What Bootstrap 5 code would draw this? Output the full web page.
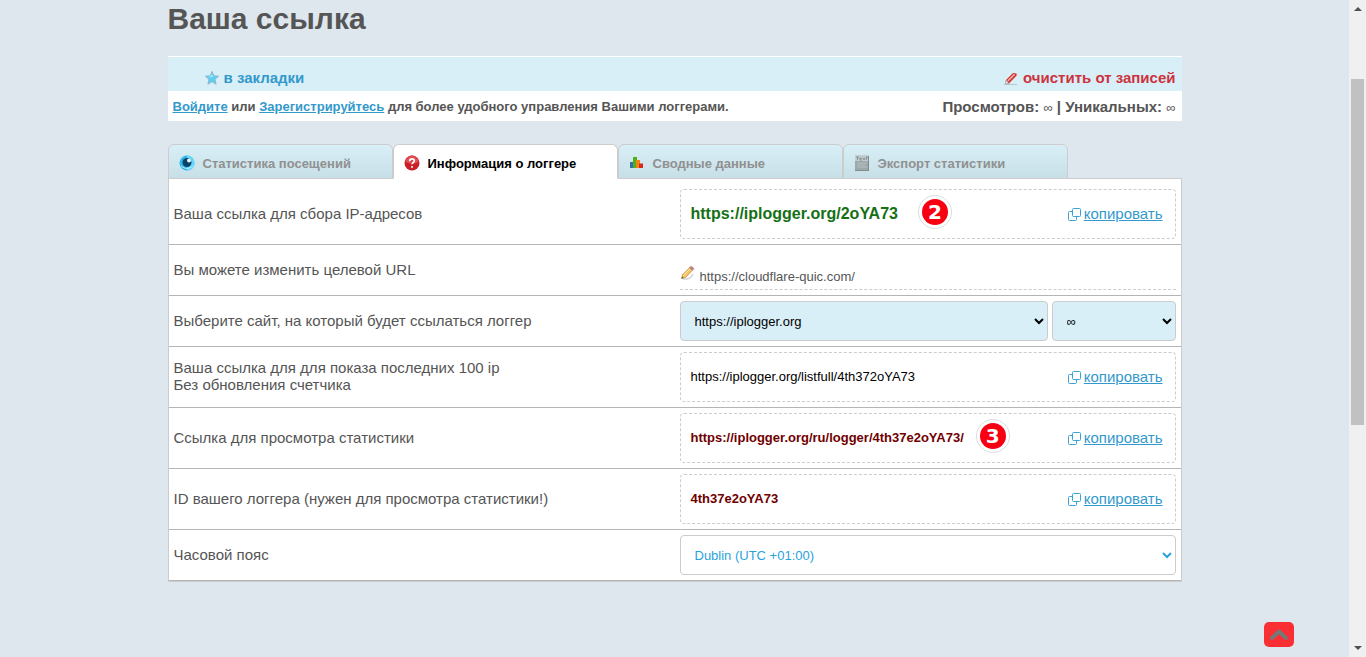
<!DOCTYPE html>
<html lang="ru">
<head>
<meta charset="utf-8">
<meta name="viewport" content="width=device-width, initial-scale=1">
<title>Ваша ссылка</title>
<link href="https://cdn.jsdelivr.net/npm/bootstrap@5.3.0/dist/css/bootstrap.min.css" rel="stylesheet">
<style>
  body { background: #dde7ed; color: #555; font-family: "Liberation Sans", Arial, sans-serif; font-size: 15px; line-height: 17px; }
  a { color: #3399cc; }
  .page-wrap { max-width: 1014px; }
  .page-title { font-size: 30px; line-height: 38px; font-weight: 700; margin-bottom: 18px; }
  .toolbar { background: #d9eff7; border-top: 1px solid #fff; padding: 12px 6px 4px 36px; min-height: 35px; }
  .toolbar a, .toolbar button { font-size: 15px; font-weight: 700; line-height: 18px; }
  .btn-clear { color: #cc3340; }
  .infobar { padding: 7px 6px 5px 5px; height: 30px; margin-bottom: 23px; }
  .infobar .hint { font-size: 13px; }
  .infinity { font-size: 13px; font-weight: 400; }
  .log-tabs { margin-bottom: -1px; border: 0; }
  .log-tabs .nav-item { flex: 0 1 225px; }
  .log-tabs .nav-link { display: flex; align-items: center; gap: 8px; width: 100%; height: 35px; margin: 0; padding: 3px 10px 0; border: 1px solid #ccc; border-radius: 6px 6px 0 0; background: linear-gradient(#d9eff7, #c7dfe7); color: #909090; font-size: 13px; font-weight: 700; text-align: left; }
  .log-tabs .nav-link.active { background: #fff; color: #000; border-color: #ccc #ccc #fff; }
  .log-panel { border: 1px solid #ccc; }
  .log-panel .entry { border-bottom: 1px solid #b5b5b5; }
  .entry > div { padding: 5px; }
  .entry > div:first-child { padding-bottom: 7px; }
  .entry:first-child > div { padding-top: 10px; }
  .link-box { height: 50px; border: 1px dashed #ccc; border-radius: 4px; padding: 0 12px 2px 10px; color: #000; font-size: 13px; }
  .link-main { color: #157015; font-size: 16px; font-weight: 700; }
  .link-secret { color: #700000; font-weight: 700; }
  .btn-copy { color: #3399cc; font-size: 15px; line-height: 17px; }
  .btn-copy svg { margin-right: 3px; }
  .step { width: 34px; height: 34px; border-radius: 50%; border: 1px solid #ddd; padding: 3px; background: #fff; margin: 0 auto 2px 12px; }
  .link-main + .step { margin-left: 20px; }
  .step span { display: block; width: 26px; height: 26px; border-radius: 50%; background: #f80012; color: #fff; text-align: center; font: 700 20px/26px "DejaVu Sans", sans-serif; }
  .target { border-bottom: 1px dashed #ccc; height: 40px; padding-top: 13px; }
  .target svg { margin-bottom: 6px; }
  .target input { border: 0; outline: 0; background: none; color: #555; font-size: 13px; padding: 0; }
  .pick { height: 40px; border: 1px solid #ccc; border-radius: 4px; background: #d9eff7; color: #000; font-size: 13px; padding: 10px; }
  .pick-zone { background: #fff; color: #29a3dd; }
  .btn-top { right: 72px; bottom: 10px; width: 30px; height: 25px; border-radius: 5px; background: #fa2f33; }
  .scroll-rail { flex: 0 0 17px; background: #f0f0f0; padding: 0 2px; }
  .rail-thumb { position: absolute; top: 79px; left: 2px; right: 2px; height: 346px; background: #c1c1c1; }
</style>
</head>
<body>
<svg class="d-none" aria-hidden="true">
  <symbol id="copy" viewBox="0 0 13 13"><path d="M4.500 1.500a1 1 0 0 1 1-1h6a1 1 0 0 1 1 1v6a1 1 0 0 1-1 1h-6a1 1 0 0 1-1-1zM4.500 3.500h-3a1 1 0 0 0-1 1v7a1 1 0 0 0 1 1h6a1 1 0 0 0 1-1v-3" fill="none" stroke="#3aa3d3"/></symbol>
</svg>
<div class="d-flex min-vh-100">
  <main class="flex-grow-1">
    <div class="page-wrap mx-auto">
      <h1 class="page-title">Ваша ссылка</h1>
      <div class="toolbar d-flex justify-content-between">
        <a href="#" class="d-inline-flex align-items-center gap-1 text-decoration-none">
          <svg width="16" height="16" viewBox="0 0 16 16"><path d="M8 1.500l1.900 4.300 4.700.4-3.600 3.100 1.100 4.900L8 11.700l-4.100 2.500L5 9.300 1.400 6.200l4.700-.4z" fill="#5ccdf4" stroke="#8fb9cc"/><path d="M8 4l1.200 2.800-2.500.7L5 7z" fill="#9ce5fb"/></svg>
          <span>в закладки</span></a>
        <button type="button" class="btn-clear btn p-0 border-0 d-inline-flex align-items-center gap-1">
          <svg width="16" height="16" viewBox="0 0 16 16"><path d="M1 14.500h13" stroke="#b9c9d0"/><path d="M3 10l7-7 3.500.5.200 2L6 13.500l-3-.5z" fill="#d8302c"/><path d="M4.800 11l6.800-6.800" stroke="#f6b9b7" stroke-width="1.500"/><path d="M3 10l3 3.500-3.600.5z" fill="#eee" stroke="#888" stroke-width=".6"/></svg>
          <span>очистить от записей</span></button>
      </div>
      <div class="infobar bg-white d-flex justify-content-between fw-bold">
        <span class="hint"><a href="#">Войдите</a> или <a href="#">Зарегистрируйтесь</a> для более удобного управления Вашими логгерами.</span>
        <span>Просмотров: <span class="infinity">∞</span> | Уникальных: <span class="infinity">∞</span></span>
      </div>

      <ul class="nav nav-tabs log-tabs flex-nowrap position-relative">
        <li class="nav-item"><button type="button" class="nav-link">
          <svg width="16" height="16" viewBox="0 0 16 16"><circle cx="8" cy="8" r="7.500" fill="#31b5ea"/><path d="M8 .5a7.500 7.500 0 0 1 0 15z" fill="#66d7fa"/><circle cx="8" cy="7.500" r="4.500" fill="#074267"/><circle cx="10" cy="5.500" r="2" fill="#e5f9ff"/><path d="M2 11q6 5 12 0" stroke="#b4edfc" fill="none"/></svg>
          <span>Статистика посещений</span></button></li>
        <li class="nav-item"><button type="button" class="nav-link active">
          <svg width="16" height="16" viewBox="0 0 16 16"><circle cx="8" cy="8" r="7.500" fill="#c91f27"/><path d="M1.500 7a6.500 6.500 0 0 1 13 0q-6 3-13 0" fill="#e04b50"/><path d="M5.700 6.200q0-2.400 2.300-2.400t2.300 2q0 1.300-1.300 2-.9.500-.9 1.500M8 11v1.700" fill="none" stroke="#fff" stroke-width="1.700"/></svg>
          <span>Информация о логгере</span></button></li>
        <li class="nav-item"><button type="button" class="nav-link">
          <svg width="16" height="16" viewBox="0 0 16 16"><path d="M1 7h4v6H1z" fill="#376fae"/><path d="M4 2h4v11H4z" fill="#53af16"/><path d="M7 5h4v8H7z" fill="#ef8518"/><path d="M10 8.500h4V13h-4z" fill="#d9271c"/></svg>
          <span>Сводные данные</span></button></li>
        <li class="nav-item"><button type="button" class="nav-link">
          <svg width="16" height="16" viewBox="0 0 16 16"><path d="M1 0h14v16H1z" fill="#9ba8aa"/><path d="M1 0h14v6H1z" fill="#c0cccf"/><path d="M2 2h3M3.500 2v3M6 3.500h2M6 5h2M6 2.500V5M9 2.500L11 5M11 2.500L9 5M12.500 1.500V5M12 2.500h2" stroke="#7d898c" stroke-width=".8"/><path d="M3 8h10M3 10h8M3 12h10" stroke="#b3bec0"/><path d="M1 15.500h14M14.500 1v14" stroke="#808c8e"/></svg>
          <span>Экспорт статистики</span></button></li>
      </ul>

      <section class="log-panel bg-white">
        <div class="entry row g-0 align-items-center">
          <div class="col-6">Ваша ссылка для сбора IP-адресов</div>
          <div class="col-6"><div class="link-box d-flex align-items-center">
            <span class="link-main">https://iplogger.org/2oYA73</span>
            <span class="step"><span>2</span></span>
            <a href="#" class="btn-copy"><svg width="13" height="13"><use href="#copy"/></svg>копировать</a>
          </div></div>
        </div>
        <div class="entry row g-0 align-items-center">
          <div class="col-6"><label for="target">Вы можете изменить целевой URL</label></div>
          <div class="col-6"><div class="target d-flex align-items-center gap-1">
            <svg width="16" height="16" viewBox="0 0 16 16"><path d="M3 14q7 1 10-5" stroke="#ddd" stroke-width="2" fill="none"/><path d="M1.500 13.500l1.200-4L9.500 2.700l3 2.500-7 7.300z" fill="#f5c264" stroke="#b98b42" stroke-width=".7"/><path d="M3.500 10.500l7-7" stroke="#ffe7a9"/><path d="M9.500 2.700l1.600-1.500 3 2.300-1.600 1.700z" fill="#dd7770" stroke="#888" stroke-width=".6"/><path d="M1.500 13.500l.6-2 1.500 1.400z" fill="#555"/></svg>
            <input id="target" type="text" class="flex-grow-1" value="https://cloudflare-quic.com/">
          </div></div>
        </div>
        <div class="entry row g-0 align-items-center">
          <div class="col-6"><label for="site">Выберите сайт, на который будет ссылаться логгер</label></div>
          <div class="col-6 d-flex gap-1">
            <select id="site" class="pick flex-grow-1"><option>https://iplogger.org</option></select>
            <select class="pick w-25" aria-label="Расширение"><option>∞</option></select>
          </div>
        </div>
        <div class="entry row g-0 align-items-center">
          <div class="col-6">Ваша ссылка для для показа последних 100 ip<br>Без обновления счетчика</div>
          <div class="col-6"><div class="link-box d-flex align-items-center">
            <span class="me-auto">https://iplogger.org/listfull/4th372oYA73</span>
            <a href="#" class="btn-copy"><svg width="13" height="13"><use href="#copy"/></svg>копировать</a>
          </div></div>
        </div>
        <div class="entry row g-0 align-items-center">
          <div class="col-6">Ссылка для просмотра статистики</div>
          <div class="col-6"><div class="link-box d-flex align-items-center">
            <span class="link-secret">https://iplogger.org/ru/logger/4th37e2oYA73/</span>
            <span class="step"><span>3</span></span>
            <a href="#" class="btn-copy"><svg width="13" height="13"><use href="#copy"/></svg>копировать</a>
          </div></div>
        </div>
        <div class="entry row g-0 align-items-center">
          <div class="col-6">ID вашего логгера (нужен для просмотра статистики!)</div>
          <div class="col-6"><div class="link-box d-flex align-items-center">
            <span class="link-secret me-auto">4th37e2oYA73</span>
            <a href="#" class="btn-copy"><svg width="13" height="13"><use href="#copy"/></svg>копировать</a>
          </div></div>
        </div>
        <div class="entry row g-0 align-items-center">
          <div class="col-6"><label for="zone">Часовой пояс</label></div>
          <div class="col-6 d-flex"><select id="zone" class="pick pick-zone w-100"><option>Dublin (UTC +01:00)</option></select></div>
        </div>
      </section>
    </div>
  </main>
  <div class="scroll-rail d-flex flex-column justify-content-between position-relative" aria-hidden="true">
    <svg width="13" height="17"><path d="M3 11l4-4 4 4z" fill="#505050"/></svg>
    <div class="rail-thumb"></div>
    <svg width="13" height="17"><path d="M3 6l4 4 4-4z" fill="#505050"/></svg>
  </div>
</div>
<button type="button" class="btn-top btn p-0 border-0 position-fixed d-flex align-items-center justify-content-center" aria-label="Наверх">
  <svg width="20" height="14" viewBox="0 0 20 14"><path d="M3 10l7-6.500 7 6.500" fill="none" stroke="#777" stroke-width="4" stroke-linecap="round" stroke-linejoin="round"/></svg>
</button>
<script src="https://cdn.jsdelivr.net/npm/bootstrap@5.3.0/dist/js/bootstrap.bundle.min.js"></script>
</body>
</html>
